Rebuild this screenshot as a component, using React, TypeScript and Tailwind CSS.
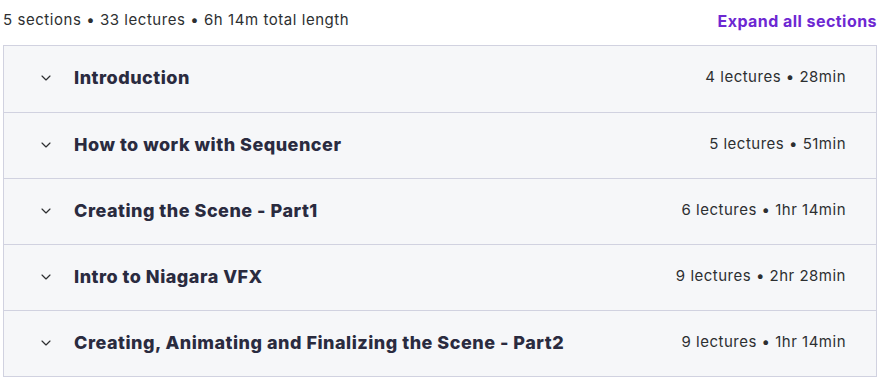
import { ChevronDown } from "lucide-react";

const sections = [
  { title: "Introduction", meta: "4 lectures • 28min" },
  { title: "How to work with Sequencer", meta: "5 lectures • 51min" },
  { title: "Creating the Scene - Part1", meta: "6 lectures • 1hr 14min" },
  { title: "Intro to Niagara VFX", meta: "9 lectures • 2hr 28min" },
  { title: "Creating, Animating and Finalizing the Scene - Part2", meta: "9 lectures • 1hr 14min" },
];

export default function App() {
  return (
    <div className="w-[881px] h-[379px] bg-white pl-[3px] pr-[4px] font-['Inter',sans-serif] text-[#2d2f31]">
      <div className="flex items-center justify-between h-[45px] pb-[4px]">
        <span className="text-[15px] tracking-[0.55px]">5 sections • 33 lectures • 6h 14m total length</span>
        <button className="text-[16px] font-bold text-[#6d28d2] tracking-[0.45px]">Expand all sections</button>
      </div>
      <div className="border border-[#d1d2e0] bg-[#f6f7f9]">
        {sections.map((s, i) => (
          <div
            key={s.title}
            className={`flex items-center h-[66px] pl-[34px] pr-[30px] pb-[3px] ${i > 0 ? "border-t border-[#d1d2e0]" : ""}`}
          >
            <ChevronDown size={16} strokeWidth={1.75} className="text-[#2d2f31] mr-[20px] mt-[1px]" />
            <span className="flex-1 text-[18px] font-extrabold tracking-[0.5px] text-[#2a2b3f]">{s.title}</span>
            <span className="text-[15px] tracking-[0.5px]">{s.meta}</span>
          </div>
        ))}
      </div>
    </div>
  );
}
